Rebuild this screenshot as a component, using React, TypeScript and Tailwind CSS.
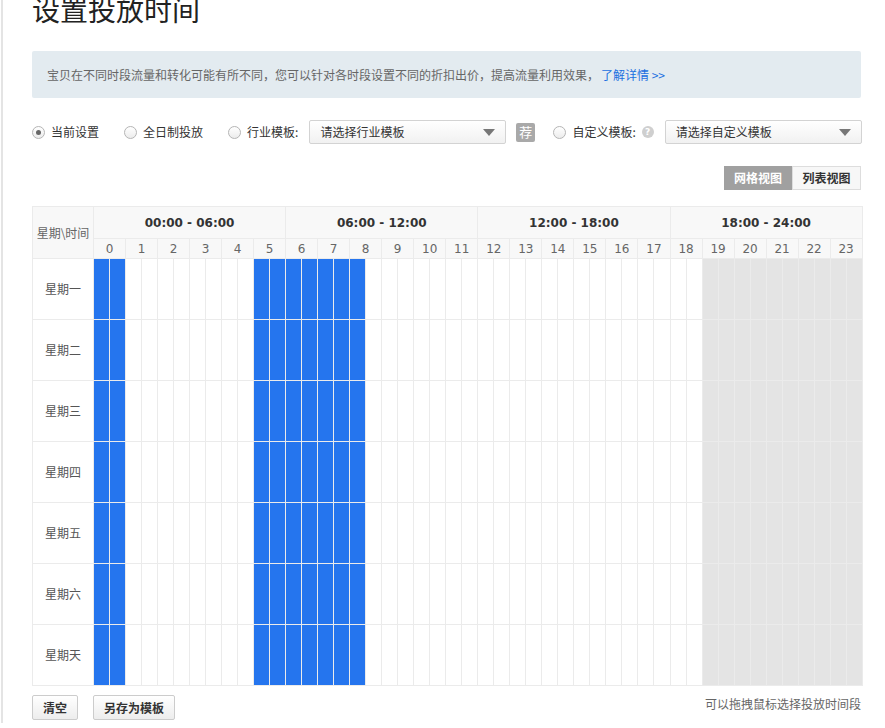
import React from "react";

const cjk = { fontFamily: '"Noto Sans CJK SC", "Microsoft YaHei", sans-serif' };
const num = { fontFamily: '"DejaVu Sans", Tahoma, sans-serif' };

const days = ["星期一", "星期二", "星期三", "星期四", "星期五", "星期六", "星期天"];
const ranges = ["00:00 - 06:00", "06:00 - 12:00", "12:00 - 18:00", "18:00 - 24:00"];

// half-hour slots, 0..47
const isOn = (slot: number) => slot < 2 || (slot >= 10 && slot <= 16);
const isOff = (slot: number) => slot >= 38;

function Radio({ checked }: { checked?: boolean }) {
  return (
    <span className="flex h-[13px] w-[13px] shrink-0 items-center justify-center rounded-full border border-[#b5b5b5] bg-gradient-to-b from-white to-[#ececec]">
      {checked && <span className="h-[5px] w-[5px] rounded-full bg-[#666]" />}
    </span>
  );
}

function Select({ text }: { text: string }) {
  return (
    <div className="flex h-[24px] w-[197px] shrink-0 items-center justify-between rounded-[2px] border border-[#d3d3d3] bg-gradient-to-b from-white to-[#f1f1f1] pl-[10px] pr-[10px] text-[12px] text-[#333]">
      <span>{text}</span>
      <svg width="12" height="7" viewBox="0 0 12 7">
        <path d="M0 0h12L6 7z" fill="#777" />
      </svg>
    </div>
  );
}

export default function App() {
  return (
    <div className="ml-px min-h-[728px] border-l-2 border-[#e4e4e4] bg-white" style={cjk}>
      <div className="w-[829px] pl-[29px] box-content">
        {/* title */}
        <h1 className="mt-[-5px] text-[28px] leading-none text-[#222]">设置投放时间</h1>

        {/* info */}
        <div className="mt-[28px] flex h-[47px] items-center rounded-[2px] bg-[#e3ebf0] pl-[15px] text-[12px] text-[#666]">
          宝贝在不同时段流量和转化可能有所不同，您可以针对各时段设置不同的折扣出价，提高流量利用效果，
          <span className="ml-[2px] text-[#1a6fe0]">了解详情 &gt;&gt;</span>
        </div>

        {/* options */}
        <div className="mt-[22px] flex h-[24px] items-center whitespace-nowrap text-[12px] text-[#333]">
          <label className="flex shrink-0 items-center gap-[6px]">
            <Radio checked />
            当前设置
          </label>
          <label className="ml-[25px] flex shrink-0 items-center gap-[6px]">
            <Radio />
            全日制投放
          </label>
          <label className="ml-[25px] flex shrink-0 items-center gap-[6px]">
            <Radio />
            行业模板:
          </label>
          <div className="ml-[11px]">
            <Select text="请选择行业模板" />
          </div>
          <span className="ml-[10px] flex h-[19px] w-[19px] shrink-0 items-center justify-center rounded-[2px] bg-[#a9a9a9] text-[13px] text-white">
            荐
          </span>
          <label className="ml-[18px] flex shrink-0 items-center gap-[6px]">
            <Radio />
            自定义模板:
          </label>
          <span className="ml-[6px] flex h-[12px] w-[12px] shrink-0 items-center justify-center rounded-full bg-[#cfcfcf] text-[9px] font-bold leading-none text-white" style={num}>
            ?
          </span>
          <div className="ml-[11px]">
            <Select text="请选择自定义模板" />
          </div>
        </div>

        {/* view toggle */}
        <div className="mt-[22px] flex justify-end">
          <div className="flex h-[24px] text-[12px] font-bold">
            <span className="flex w-[68px] items-center justify-center bg-[#a0a0a0] text-white">网格视图</span>
            <span className="flex w-[69px] items-center justify-center border border-[#ddd] bg-[#f7f7f7] text-[#333]">列表视图</span>
          </div>
        </div>

        {/* grid */}
        <table className="mt-[16px] w-[829px] table-fixed border-collapse text-[12px]">
          <colgroup>
            <col className="w-[61px]" />
            {Array.from({ length: 48 }).map((_, i) => (
              <col key={i} className="w-[16px]" />
            ))}
          </colgroup>
          <thead>
            <tr className="h-[32px] bg-[#f8f8f8]">
              <th rowSpan={2} className="border border-[#ebebeb] font-normal text-[#666]">
                星期\时间
              </th>
              {ranges.map((r) => (
                <th key={r} colSpan={12} className="border border-[#ebebeb] text-[12px] font-bold text-[#333]" style={num}>
                  {r}
                </th>
              ))}
            </tr>
            <tr className="h-[20px] bg-[#f8f8f8]">
              {Array.from({ length: 24 }).map((_, h) => (
                <th key={h} colSpan={2} className="border border-[#ebebeb] p-0 text-[12px] font-normal leading-none text-[#666]" style={num}>
                  {h}
                </th>
              ))}
            </tr>
          </thead>
          <tbody>
            {days.map((d) => (
              <tr key={d} className="h-[61px]">
                <td className="border border-[#ebebeb] text-center text-[#555]">{d}</td>
                {Array.from({ length: 48 }).map((_, s) => (
                  <td
                    key={s}
                    className={
                      isOn(s)
                        ? "border border-[#ebebeb] bg-[#2575ee] p-0"
                        : isOff(s)
                          ? "border border-[#ebebeb] bg-[#e4e4e4] p-0"
                          : "border border-[#ebebeb] bg-white p-0"
                    }
                  />
                ))}
              </tr>
            ))}
          </tbody>
        </table>

        {/* footer */}
        <div className="mt-[9px] flex items-center justify-between">
          <div className="flex gap-[15px] text-[12px] font-bold text-[#333]">
            <button className="h-[25px] rounded-[2px] border border-[#ccc] bg-gradient-to-b from-white to-[#ededed] px-[10px]">清空</button>
            <button className="h-[25px] rounded-[2px] border border-[#ccc] bg-gradient-to-b from-white to-[#ededed] px-[10px]">另存为模板</button>
          </div>
          <span className="mt-[-8px] text-[12px] text-[#666]">可以拖拽鼠标选择投放时间段</span>
        </div>
      </div>
    </div>
  );
}
